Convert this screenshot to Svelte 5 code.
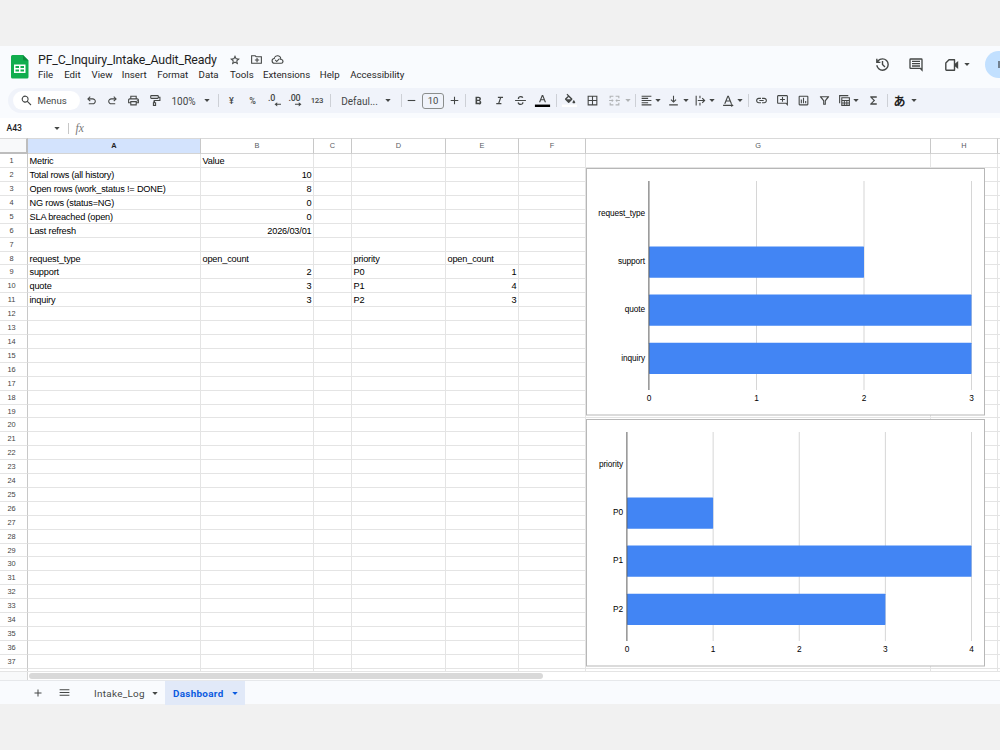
<script lang="ts">
	type Tool = { gap: number; icon?: string; text?: string; kind?: string; width?: number };
	type Bar = { label: string; value: number };

	const menus = [
		{ label: "File", width: 26.2 },
		{ label: "Edit", width: 27.3 },
		{ label: "View", width: 30.3 },
		{ label: "Insert", width: 35.4 },
		{ label: "Format", width: 41.4 },
		{ label: "Data", width: 31.4 },
		{ label: "Tools", width: 33 },
		{ label: "Extensions", width: 56.8 },
		{ label: "Help", width: 30.4 },
		{ label: "Accessibility", width: 60 },
	];

	const tools: Tool[] = [
		{ icon: "undo", gap: 3 },
		{ icon: "redo", gap: 5 },
		{ icon: "print", gap: 5.5 },
		{ icon: "paint", gap: 5 },
		{ text: "100%", kind: "label", width: 26, gap: 8 },
		{ kind: "arrow", gap: 7.5 },
		{ kind: "sep", gap: 8 },
		{ text: "¥", kind: "small", gap: 4.5 },
		{ text: "%", kind: "small", gap: 5 },
		{ icon: "decrease", gap: 5.5 },
		{ icon: "increase", gap: 5.5 },
		{ text: "123", kind: "tiny", gap: 5.5 },
		{ kind: "sep", gap: 5 },
		{ text: "Defaul...", kind: "label", width: 37, gap: 10 },
		{ kind: "arrow", gap: 7 },
		{ kind: "sep", gap: 9.5 },
		{ icon: "minus", gap: 2 },
		{ text: "10", kind: "size", width: 22, gap: 2.5 },
		{ icon: "plus", gap: 2 },
		{ kind: "sep", gap: 3 },
		{ icon: "bold", gap: 4 },
		{ icon: "italic", gap: 5 },
		{ icon: "strike", gap: 5.5 },
		{ icon: "color", gap: 5.5 },
		{ kind: "sep", gap: 5.5 },
		{ icon: "fill", gap: 4.5 },
		{ icon: "borders", gap: 7 },
		{ icon: "merge", kind: "off", gap: 6 },
		{ kind: "arrow off", gap: 3 },
		{ kind: "sep", gap: 3.5 },
		{ icon: "align", gap: 3 },
		{ kind: "arrow", gap: 0.5 },
		{ icon: "valign", gap: 4.5 },
		{ kind: "arrow", gap: 1 },
		{ icon: "wrap", gap: 3.5 },
		{ kind: "arrow", gap: 1 },
		{ icon: "rotate", gap: 5 },
		{ kind: "arrow", gap: 1 },
		{ kind: "sep", gap: 5 },
		{ icon: "link", gap: 4 },
		{ icon: "comment", gap: 5 },
		{ icon: "chart", gap: 5 },
		{ icon: "filter", gap: 5.5 },
		{ icon: "table", gap: 4 },
		{ kind: "arrow", gap: 0.5 },
		{ icon: "sigma", gap: 6.5 },
		{ kind: "sep", gap: 5.5 },
		{ text: "あ", kind: "kana", gap: 3.5 },
		{ kind: "arrow", gap: 3.5 },
	];

	// filled glyphs on a 24 unit grid
	const icons: Record<string, string> = {
		undo: "M7 19v-2h7.1q1.575 0 2.738-1T18 13.500t-1.162-2.500T14.100 10H7.800l2.600 2.600L9 14 4 9l5-5 1.400 1.400L7.800 8h6.300q2.425 0 4.163 1.575T20 13.500t-1.737 3.925T14.100 19z",
		redo: "M17 19v-2H9.900q-1.575 0-2.738-1T6 13.500t1.162-2.500T9.900 10h6.300l-2.600 2.600L15 14l5-5-5-5-1.400 1.400L16.200 8H9.900Q7.475 8 5.737 9.575T4 13.500t1.737 3.925T9.900 19z",
		print: "M16 8V5H8v3H6V3h12v5zM4 10h16zm14 2.500a1 1 0 1 0 0-.01zM16 19v-4H8v4zm2 2H6v-4H2v-6q0-1.275.875-2.137T5 8h14q1.275 0 2.137.863T22 11v6h-4zm2-6v-4q0-1-1-1H5q-1 0-1 1v4h2v-2h12v2z",
		paint: "M18 2H6a2 2 0 0 0-2 2v3a2 2 0 0 0 2 2h12a2 2 0 0 0 2-2h1v4h-9a2 2 0 0 0-2 2v2H9v7h6v-7h-2v-2h10V5h-3V4a2 2 0 0 0-2-2zM6 4h12v3H6zm5 13h2v3h-2z",
		minus: "M5 11h14v2H5z",
		plus: "M11 5h2v6h6v2h-6v6h-2v-6H5v-2h6z",
		bold: "M6.500 19V5h5.700q1.700 0 3 1.050t1.300 2.900q0 1.300-.6 2t-1.200 1.050q.75.300 1.600 1.200t.85 2.600q0 2.200-1.600 3.200T12.500 19zm3-2.800h2.800q1.300 0 1.600-.65t.3-1q0-.3-.3-.95t-1.700-.6H9.500zm0-5.700h2.500q.9 0 1.300-.5t.4-1q0-.6-.45-1.050T12.100 7.600H9.500z",
		italic: "M6 19v-2.200h3.600l3.200-9.600H9V5h9.500v2.200h-3.400l-3.200 9.600h3.600V19z",
		strike: "M2 13v-2h20v2zm5-4q-.3-2.300 1.400-3.900T12.200 3.500q1.700 0 3 .8t2 2.300L15 7.500q-.9-1.700-2.900-1.700-1.300 0-2 .7T9.500 9zm5.200 11.500q-2.200 0-3.700-1.100T6.500 16l2.200-.9q1 3.100 3.600 3.100 1.400 0 2.200-.7t.6-2.500h2.400q.2 2.500-1.500 4t-3.800 1.500z",
		borders: "M3 21V3h18v18zm8-2v-6H5v6zm2 0h6v-6h-6zm-2-8V5H5v6zm2 0h6V5h-6z",
		merge: "M3 3h7v2H5v3H3zm11 0h7v5h-2V5h-5zM3 16h2v3h5v2H3zm16 0h2v5h-7v-2h5zM2 11h5V9l3.500 3L7 15v-2H2zm20 0h-5V9l-3.500 3 3.500 3v-2h5z",
		align: "M3 3h18v2H3zm0 4h12v2H3zm0 4h18v2H3zm0 4h12v2H3zm0 4h18v2H3z",
		valign: "M4 19h16v2H4zm7-16h2v9.500l3-3 1.400 1.400L12 16.300l-5.400-5.400L8 9.500l3 3z",
		wrap: "M3 3h2v18H3zm7 0h2v5h-2zm0 13h2v5h-2zM7 11h10l-2.600-2.600L16 7l5 5-5 5-1.600-1.400L17 13H7z",
		rotate: "M4 18 10 3h2.500l6 15h-2.400l-1.500-4H8l-1.600 4zm4.700-6h5l-2.500-6.500zM2 20h15v-2.500l4.500 3.500-4.500 3v-2H2z",
		link: "M11 17H7q-2.075 0-3.537-1.463T2 12t1.463-3.537T7 7h4v2H7a3 3 0 0 0 0 6h4zm-3-4v-2h8v2zm5 4v-2h4a3 3 0 0 0 0-6h-4V7h4q2.075 0 3.538 1.463T22 12t-1.462 3.537T17 17z",
		comment: "M22 22l-4-4H4q-.825 0-1.412-.587T2 16V4q0-.825.588-1.412T4 2h16q.825 0 1.413.588T22 4zM4 4v12h15l1 1V4zm7 1.500h2V9h3.500v2H13v3.500h-2V11H7.500V9H11z",
		chart: "M7 10h2v7H7zm4-3h2v10h-2zm4 6h2v4h-2zM3 5q0-2 2-2h14q2 0 2 2v14q0 2-2 2H5q-2 0-2-2zm2 0v14h14V5z",
		filter: "M3.500 4h17v1.500L14.500 13v7h-5v-7l-6-7.500zM7 6l4.500 6v6h1v-6L17 6z",
		table: "M2 2h17v2H4v13H2zm4 4h16v16H6zm2 2v3h12V8zm0 5v2.500h2.800V13zm4.600 0v2.500h2.800V13zm4.600 0v2.500H20V13zM8 17.500V20h2.800v-2.500zm4.600 0V20h2.800v-2.500zm4.600 0V20H20v-2.500z",
		sigma: "M6 20v-2l6-6-6-6V4h12v2.800H9.800L15 12l-5.200 5.200H18V20z",
		star: "m8.850 16.825 3.150-1.900 3.150 1.925-.825-3.600 2.775-2.400-3.650-.325-1.450-3.400-1.450 3.375-3.650.325 2.775 2.425zM5.825 21l1.625-7.025L2 9.250l7.200-.625L12 2l2.800 6.625 7.200.625-5.450 4.725L18.175 21 12 17.275z",
		move: "M12 17h2v-3h3v-2h-3V9h-2v3H9v2h3zM2 20V4h8l2 2h10v14zM4 18h16V8h-9L9 6H4z",
		cloud: "m10.500 17 5.900-5.800-1.400-1.400-4.500 4.400-2-2-1.400 1.400zM6.500 20a5.500 5.500 0 0 1-1.250-10.850A7 7 0 0 1 19 11a4.500 4.500 0 0 1-.5 9zm0-2h12a2.500 2.500 0 0 0 0-5H17v-2a5 5 0 0 0-10 0h-.5a3.500 3.500 0 0 0 0 7z",
		history: "M12 21q-3.450 0-6.012-2.287T3.050 13H5.100q.35 2.600 2.313 4.300T12 19q2.925 0 4.963-2.037T19 12t-2.037-4.962T12 5q-1.725 0-3.225.8T6.250 8H9v2H3V4h2v2.350q1.275-1.600 3.113-2.475T12 3a9 9 0 0 1 0 18zm2.800-4.800L11 12.400V7h2v4.600l3.200 3.200z",
		notes: "M22 22l-4-4H4q-2 0-2-2V4q0-2 2-2h16q2 0 2 2zM4 4v12h15l1 1V4zm2 1.500h12v2H6zm0 3.500h12v2H6zm0 3.500h12v2H6z",
		search: "m19.600 21-6.300-6.300A6.500 6.500 0 1 1 14.700 13.300L21 19.600zM9.500 14a4.500 4.500 0 1 0 0-9 4.500 4.500 0 0 0 0 9z",
		lines: "M3 6h18v2H3zm0 5h18v2H3zm0 5h18v2H3z",
	};

	const columns = [
		{ name: "A", width: 173 },
		{ name: "B", width: 113 },
		{ name: "C", width: 38 },
		{ name: "D", width: 94 },
		{ name: "E", width: 73 },
		{ name: "F", width: 67 },
		{ name: "G", width: 345 },
		{ name: "H", width: 67 },
		{ name: "", width: 30 },
	];

	const cells: Record<number, Record<string, string | number>> = {
		1: { A: "Metric", B: "Value" },
		2: { A: "Total rows (all history)", B: 10 },
		3: { A: "Open rows (work_status != DONE)", B: 8 },
		4: { A: "NG rows (status=NG)", B: 0 },
		5: { A: "SLA breached (open)", B: 0 },
		6: { A: "Last refresh", B: "2026/03/01" },
		8: { A: "request_type", B: "open_count", D: "priority", E: "open_count" },
		9: { A: "support", B: 2, D: "P0", E: 1 },
		10: { A: "quote", B: 3, D: "P1", E: 4 },
		11: { A: "inquiry", B: 3, D: "P2", E: 3 },
	};
	const rows = Array.from({ length: 38 }, (_, i) => i + 1);

	const isRight = (v: string | number | undefined) => typeof v === "number" || /^\d{4}\//.test(v ?? "");

	const byType: Bar[] = [
		{ label: "request_type", value: 0 },
		{ label: "support", value: 2 },
		{ label: "quote", value: 3 },
		{ label: "inquiry", value: 3 },
	];
	const byPriority: Bar[] = [
		{ label: "priority", value: 0 },
		{ label: "P0", value: 1 },
		{ label: "P1", value: 4 },
		{ label: "P2", value: 3 },
	];
</script>

{#snippet glyph(name: string, size = 13)}
	<svg width={size} height={size} viewBox="0 0 24 24" fill="currentColor" fill-rule="evenodd">
		{#if name === "decrease" || name === "increase"}
			<text x={name === "decrease" ? 0 : -1} y="13" class="decimal">{name === "decrease" ? ".0" : ".00"}</text>
			{#if name === "decrease"}
				<path d="M24 18h-7v-3l-5 4 5 4v-3h7z" />
			{:else}
				<path d="M11 18h7v-3l5 4-5 4v-3h-7z" />
			{/if}
		{:else if name === "color"}
			<path d="M5.500 15 10.800 2h2.400l5.300 13h-2.400l-1.300-3.300H9.200L7.900 15zm4.400-5.200h4.200L12 4.500z" />
			<path d="M-2 19.500h28V24H-2z" fill="#000" />
		{:else if name === "fill"}
			<path d="M6.500 1 8 -.5l9 9q1 1 0 2L11.500 16q-1 1-2 0L4 10.500q-1-1 0-2L9 3.500zM6.500 9.500h8L10.500 5.500z" />
			<path d="M20 11q2.300 2.700 2.300 4a2.300 2.300 0 0 1-4.600 0q0-1.300 2.300-4z" />
			<path d="M-2 19.500h28V24H-2z" fill="#fff" />
		{:else}
			<path d={icons[name]} />
		{/if}
	</svg>
{/snippet}

{#snippet arrow()}
	<svg width="6" height="3" viewBox="0 0 6 3" fill="currentColor"><path d="M.3 0h5.400L3 2.900z" /></svg>
{/snippet}

{#snippet barChart(bars: Bar[], left: number, max: number)}
	{@const step = (385.5 - left) / max}
	<svg class="chart" width="399" height="248" viewBox="0 0 399 248">
		<rect x=".5" y=".5" width="398" height="246.500" fill="#fff" stroke="#b7b7b7" />
		{#each Array(max) as _, i}
			<rect x={left + step * (i + 1) - 0.5} y="13" width="1" height="209" fill="#d6d6d6" />
		{/each}
		{#each bars as bar, i}
			{#if bar.value}
				<rect x={left} y={30.4 + i * 48.1} width={bar.value * step} height="31.200" rx=".6" fill="#4285f4" />
			{/if}
			<text x={left - 4} y={48.2 + i * 48.1} text-anchor="end">{bar.label}</text>
		{/each}
		<rect x={left - 0.6} y="13" width="1" height="209" fill="#5c5c5c" />
		{#each Array(max + 1) as _, i}
			<text x={left + step * i} y="233" text-anchor="middle">{i}</text>
		{/each}
	</svg>
{/snippet}

<div class="app">
	<header>
		<svg class="logo" width="18" height="24" viewBox="0 0 18 24">
			<path d="M1.500 0H12l5.500 5.500V22a1.500 1.500 0 0 1-1.500 1.500H1.500A1.500 1.500 0 0 1 0 22V1.500A1.500 1.500 0 0 1 1.500 0z" fill="#11ad4e" />
			<path d="M12 0l5.500 5.500H13a1 1 0 0 1-1-1z" fill="#0b8a3e" />
			<path fill-rule="evenodd" d="M3 9.500h11.500v8.500H3zm1.500 1.400v2.100h3.500v-2.100zm5 0v2.100H13v-2.100zm-5 3.500v2.200h3.500v-2.200zm5 0v2.200H13v-2.200z" fill="#fff" />
		</svg>
		<div class="heading">
			<div class="title-row">
				<span class="title">PF_C_Inquiry_Intake_Audit_Ready</span>
				{@render glyph("star", 12)}
				{@render glyph("move", 13)}
				{@render glyph("cloud", 13)}
			</div>
			<nav>
				{#each menus as menu}
					<span style:width="{menu.width}px">{menu.label}</span>
				{/each}
			</nav>
		</div>
		<div class="actions">
			{@render glyph("history", 17)}
			{@render glyph("notes", 16)}
			<span class="meet">
				<svg width="14" height="12" viewBox="0 0 14 12">
					<path d="M4 .8h5.500v10.400H1.500Q.8 11.200.8 10.500V4z" fill="none" stroke="#444746" stroke-width="1.400" stroke-linejoin="round" />
					<path d="M9.500 5 13.200 2v8L9.500 7z" fill="#444746" />
				</svg>
				{@render arrow()}
			</span>
			<span class="share"><i></i></span>
		</div>
	</header>

	<div class="toolbar">
		<div class="search">{@render glyph("search", 13)}<span>Menus</span></div>
		{#each tools as tool}
			<span
				class="tool {tool.kind ?? ''}"
				style:margin-left="{tool.gap}px"
				style:width={tool.width ? `${tool.width}px` : null}
			>
				{#if tool.icon}
					{@render glyph(tool.icon)}
				{:else if tool.text}
					{tool.text}
				{:else if tool.kind !== "sep"}
					{@render arrow()}
				{/if}
			</span>
		{/each}
	</div>

	<div class="formula">
		<span class="name-box">A43</span>
		{@render arrow()}
		<span class="fx">fx</span>
	</div>

	<main>
		<div class="row head">
			<span class="num"></span>
			{#each columns as col}
				<span class="cell" class:selected={col.name === "A"} style:width="{col.width}px">{col.name}</span>
			{/each}
		</div>
		{#each rows as n}
			<div class="row">
				<span class="num">{n < 38 ? n : ""}</span>
				{#each columns as col}
					{@const value = cells[n]?.[col.name]}
					<span class="cell" class:right={isRight(value)} style:width="{col.width}px">{value ?? ""}</span>
				{/each}
			</div>
		{/each}
		<div class="charts">
			{@render barChart(byType, 63, 3)}
			{@render barChart(byPriority, 41, 4)}
		</div>
	</main>

	<div class="scroll"><span class="corner"></span><span class="thumb"></span></div>

	<footer>
		<span class="add">{@render glyph("plus", 12)}</span>
		<span class="all">{@render glyph("lines", 13)}</span>
		<span class="tab"><span>Intake_Log</span>{@render arrow()}</span>
		<span class="tab active"><span>Dashboard</span>{@render arrow()}</span>
	</footer>
</div>

<style>
	:global(body) {
		margin: 0;
		background: #f1f1f1;
	}
	.app {
		box-sizing: border-box;
		width: 1000px;
		height: 750px;
		padding-top: 46px;
		overflow: hidden;
		font-family: Roboto, "Noto Sans CJK JP", sans-serif;
		color: #444746;
	}
	svg {
		display: block;
		flex: none;
		overflow: visible;
	}

	header {
		display: flex;
		height: 42px;
		background: #f9fbfe;
	}
	.logo {
		margin: 8.5px 0 0 11px;
	}
	.heading {
		margin-left: 9px;
		padding-top: 5px;
		color: #1f1f1f;
	}
	.title-row {
		display: flex;
		align-items: center;
		height: 17px;
		gap: 8.5px;
		color: #444746;
	}
	.title {
		width: 182.5px;
		font-size: 12.4px;
		letter-spacing: -0.18px;
		color: #1f1f1f;
		white-space: nowrap;
	}
	nav {
		display: flex;
		font-size: 9.7px;
		line-height: 13px;
	}
	nav span {
		white-space: nowrap;
	}
	.actions {
		display: flex;
		align-items: center;
		margin-left: auto;
		height: 37px;
	}
	.actions > :global(svg + svg) {
		margin-left: 16.5px;
	}
	.meet {
		display: flex;
		align-items: center;
		gap: 5px;
		margin-left: 21.5px;
	}
	.share {
		display: flex;
		align-items: center;
		justify-content: flex-end;
		width: 15px;
		height: 27px;
		margin-left: 15px;
		border-radius: 14px 0 0 14px;
		background: #c2e0ff;
	}
	.share i {
		width: 2px;
		height: 7px;
		background: #71808f;
	}

	.toolbar {
		display: flex;
		align-items: center;
		height: 25px;
		padding-left: 13px;
		position: relative;
		z-index: 0;
		background: #f9fbfe;
		border-bottom: 5px solid #f9fbfe;
	}
	.toolbar::before {
		content: "";
		position: absolute;
		z-index: -1;
		inset: 0 0 0 8px;
		border-radius: 13px 0 0 13px;
		background: #f0f3fa;
	}
	.search {
		display: flex;
		align-items: center;
		box-sizing: border-box;
		width: 67px;
		height: 19px;
		padding-left: 6.5px;
		gap: 5px;
		border-radius: 10px;
		background: #fff;
		font-size: 9.7px;
	}
	.tool {
		display: flex;
		flex: none;
		align-items: center;
		justify-content: center;
		box-sizing: border-box;
		width: 16px;
		height: 16px;
		padding-top: 0.5px;
		white-space: nowrap;
	}
	.tool.arrow {
		width: 6px;
	}
	.tool.sep {
		width: 1px;
		height: 13px;
		background: #cdd0d6;
	}
	.tool.label {
		padding-top: 1.5px;
		font-size: 10px;
	}
	.tool.small {
		font-size: 9px;
		font-weight: 500;
	}
	.tool.tiny {
		font-size: 7.8px;
		letter-spacing: -0.2px;
		font-weight: 500;
	}
	.tool.size {
		border: 1px solid #8b8e8d;
		border-radius: 3px;
		font-size: 9.5px;
	}
	.tool.kana {
		font: 700 12px "Noto Sans CJK JP", sans-serif;
		color: #1f1f1f;
	}
	.off {
		color: #b0b3b5;
	}
	.decimal {
		font: 500 16.5px Roboto, sans-serif;
		letter-spacing: -0.5px;
	}

	.formula {
		display: flex;
		align-items: center;
		height: 20px;
		background: #fff;
	}
	.name-box {
		width: 47.5px;
		padding-left: 6.5px;
		font: 500 8.6px Roboto, sans-serif;
		color: #1f1f1f;
	}
	.fx {
		margin-left: 7.5px;
		padding-left: 7px;
		border-left: 1px solid #c7c7c7;
		font: italic 11.5px/11px "Liberation Serif", serif;
		color: #777;
	}

	main {
		position: relative;
		height: 533px;
		overflow: hidden;
		background: #fff;
		font-family: "Liberation Sans", Arial, sans-serif;
	}
	.row {
		display: flex;
		height: 13.91px;
	}
	.cell,
	.num {
		flex: none;
		box-sizing: border-box;
		border-right: 1px solid #e4e4e4;
		border-bottom: 1px solid #e4e4e4;
		line-height: 15px;
		white-space: nowrap;
	}
	.cell {
		padding: 0 1.5px 0 1.5px;
		font-size: 9.2px;
		letter-spacing: -0.18px;
		color: #000;
	}
	.right {
		text-align: right;
	}
	.num {
		width: 28px;
		padding-right: 4px;
		border-right-color: #c8c8c8;
		text-align: center;
		font-size: 7.4px;
		line-height: 14px;
		color: #444;
	}
	.head {
		height: 16.2px;
	}
	.head .cell,
	.head .num {
		border-top: 1px solid #d9d9d9;
		border-bottom: 1px solid #d4d4d4;
		border-right-color: #c8c8c8;
		text-align: center;
		font-size: 7.4px;
		line-height: 14px;
		letter-spacing: 0;
		color: #575b5f;
	}
	.head .num {
		border-right: 2px solid #bdbdbd;
		border-bottom: 2px solid #bdbdbd;
		background: #f8f9fa;
	}
	.head .selected {
		background: #d3e3fd;
		color: #1f1f1f;
		font-weight: 700;
	}
	.charts {
		position: absolute;
		top: 30px;
		left: 586px;
		display: flex;
		flex-direction: column;
		gap: 2.5px;
	}
	.chart text {
		font: 8.3px "Liberation Sans", Arial, sans-serif;
		letter-spacing: -0.1px;
		fill: #000;
	}

	.scroll {
		display: flex;
		align-items: center;
		box-sizing: border-box;
		height: 9px;
		border-top: 1px solid #e4e4e4;
		background: #fff;
	}
	.corner {
		width: 27px;
		height: 100%;
		border-right: 1px solid #d5d5d5;
		background: #f8f9fa;
	}
	.thumb {
		width: 514px;
		height: 6px;
		margin-left: 1px;
		border-radius: 3px;
		background: #d9d9d9;
	}

	footer {
		display: flex;
		align-items: center;
		box-sizing: border-box;
		height: 24px;
		border-top: 1px solid #e6e8eb;
		background: #f9fbfe;
		font-size: 9.9px;
	}
	.add {
		margin-left: 32px;
	}
	.all {
		margin-left: 14px;
	}
	.tab {
		display: flex;
		align-items: center;
		justify-content: space-between;
		box-sizing: border-box;
		width: 80px;
		height: 24px;
		padding: 1px 7px 0 8px;
		letter-spacing: 0.3px;
	}
	.all + .tab {
		width: 79px;
		margin-left: 15px;
	}
	.active {
		background: #e1e9f8;
		color: #0b5be0;
		font-weight: 700;
	}
</style>
